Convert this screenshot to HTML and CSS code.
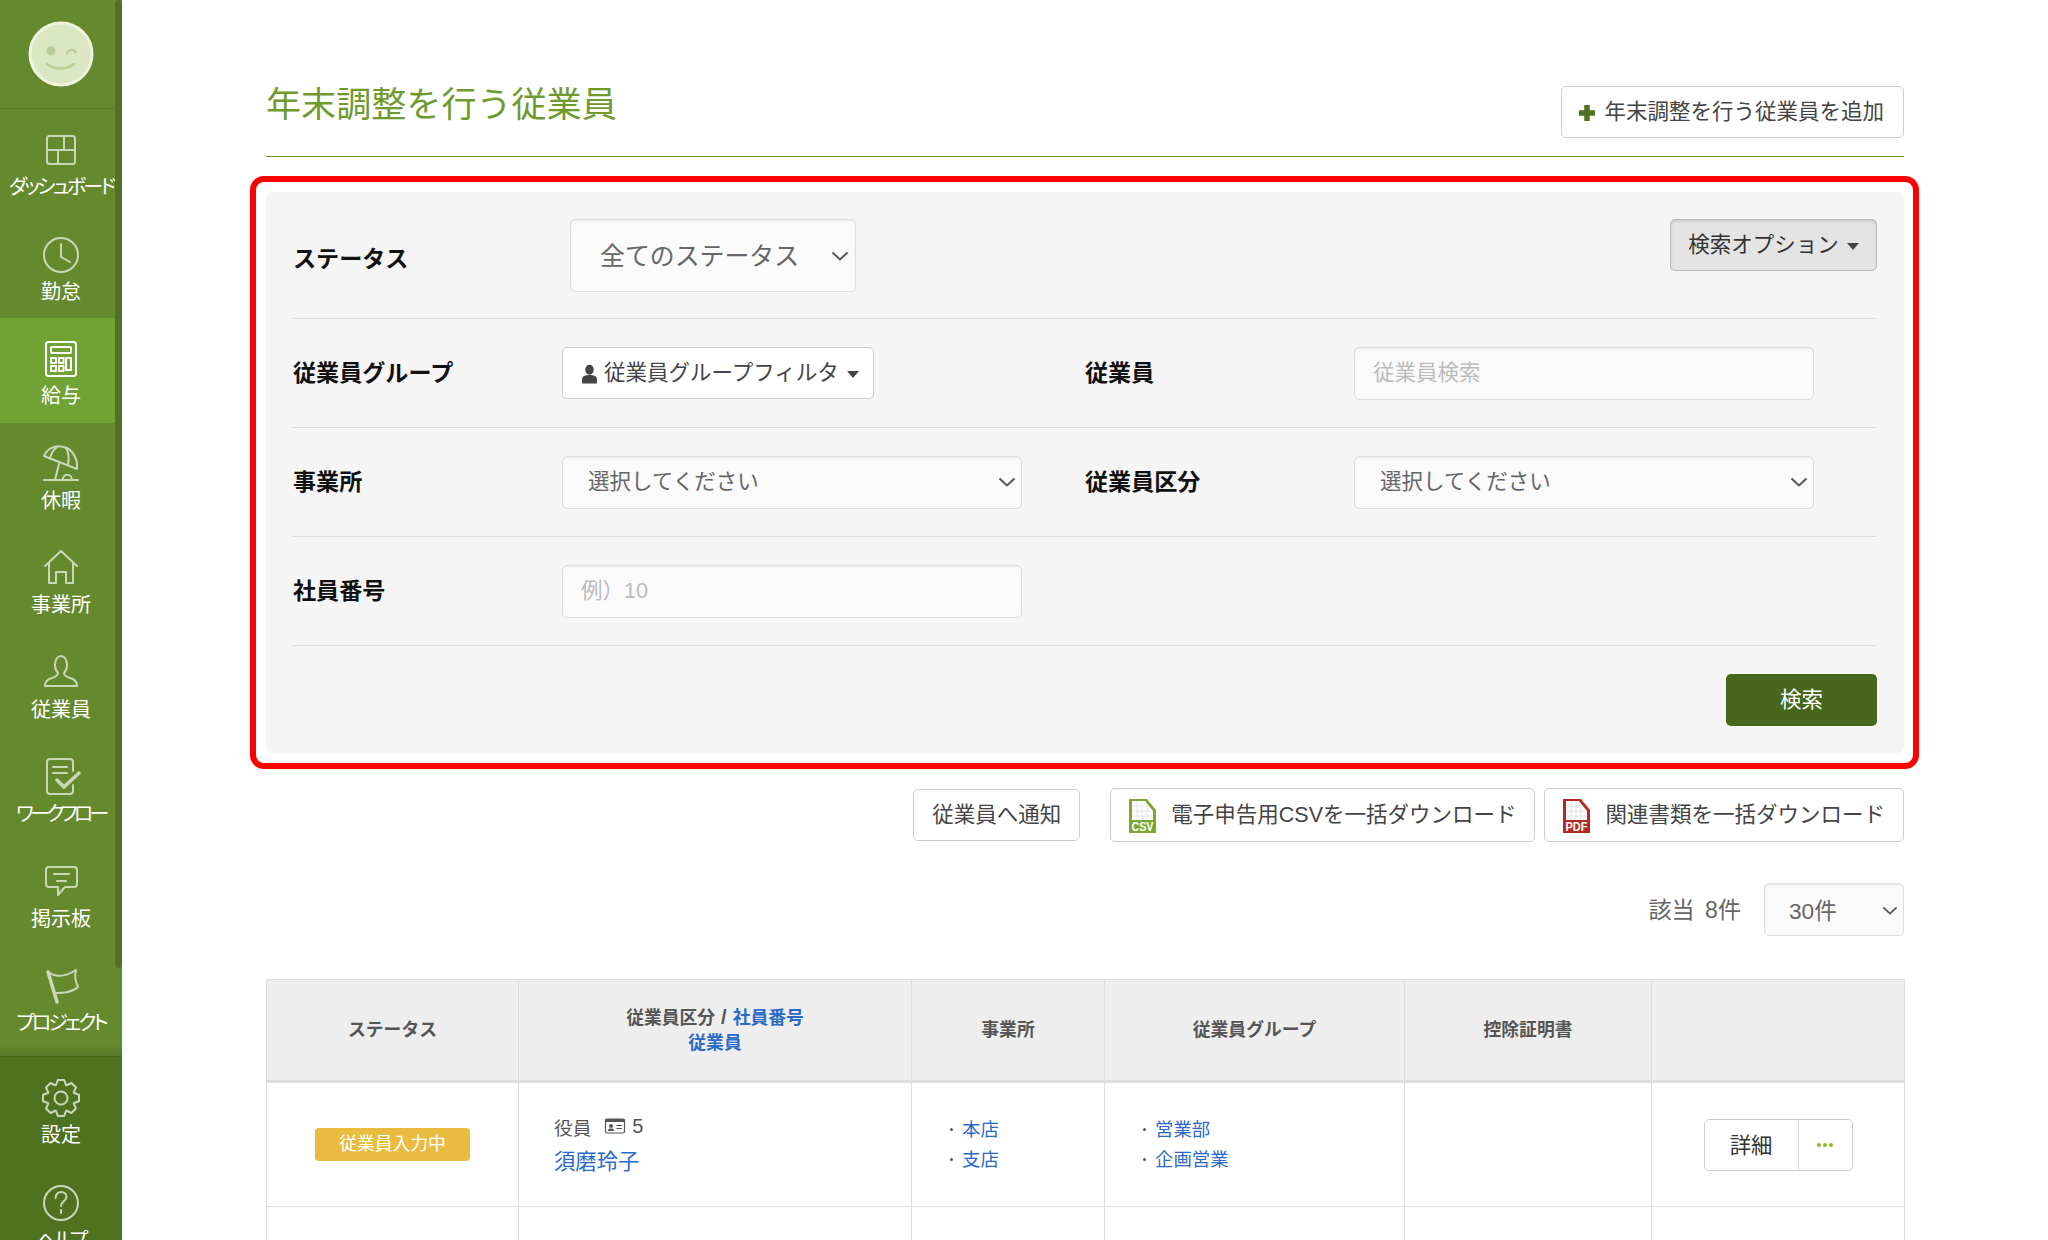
FILE: index.html
```html
<!DOCTYPE html>
<html lang="ja">
<head>
  <meta charset="UTF-8">
  <title>年末調整を行う従業員</title>
  <link rel="stylesheet" href="styles.css">
</head>
<body>
  <aside class="sidebar">
    <div class="scroll-thumb"></div>
    <div class="brand">
      <svg class="logo" width="66" height="66" viewBox="0 0 66 66">
        <circle cx="33" cy="33" r="31" fill="#dbe7c2" stroke="#eef4e0" stroke-width="3"/>
        <circle cx="23" cy="30" r="4.5" fill="#b9cd96"/>
        <path d="M39 32c2-4 7-4 9-1" fill="none" stroke="#b9cd96" stroke-width="2.5" stroke-linecap="round"/>
        <path d="M19 43c7 6 20 6 27 0" fill="none" stroke="#b9cd96" stroke-width="2.5" stroke-linecap="round"/>
      </svg>
    </div>
    <nav class="nav-main">
      <a class="nav-item">
        <svg class="nav-icon" viewBox="0 0 40 40"><rect x="6" y="6" width="28" height="28" rx="2.5"/><path d="M6 20h28M23 6v14M17 20v14"/></svg>
        <span class="nav-label nav-label-kana kana-wide">ダッシュボード</span>
      </a>
      <a class="nav-item">
        <svg class="nav-icon" viewBox="0 0 40 40"><circle cx="20" cy="20" r="17"/><path d="M20 9v13l9 5"/></svg>
        <span class="nav-label">勤怠</span>
      </a>
      <a class="nav-item active">
        <svg class="nav-icon" viewBox="0 0 40 40"><rect x="5" y="3" width="30" height="34" rx="2.5"/><rect x="10" y="8" width="20" height="6" rx="1"/><path d="M10 19h5v5h-5zM18 19h4.500v5H18zM25 19h5v12h-5zM10 27h5v5h-5zM18 27h4.500v5H18z"/></svg>
        <span class="nav-label">給与</span>
      </a>
      <a class="nav-item">
        <svg class="nav-icon" viewBox="0 0 40 40"><path d="M3 12C7 3 16 1 23 3c8 2 14 11 13 22z"/><path d="M16 3c-4 3-6 7-7 12M25 4c3 5 3 12 2 17"/><path d="M18 20l-4 16M3 36h34"/><path d="M22 36c-1-7 9-7 9 0"/></svg>
        <span class="nav-label">休暇</span>
      </a>
      <a class="nav-item">
        <svg class="nav-icon" viewBox="0 0 40 40"><path d="M4 18L20 3l16 15M8 15v20h7V24h10v11h7V15"/></svg>
        <span class="nav-label">事業所</span>
      </a>
      <a class="nav-item">
        <svg class="nav-icon" viewBox="0 0 40 40"><path d="M14 12c0-6 3-9 6-9s6 3 6 9c0 4-2 7-3 8 0 3 3 4 6 5 4 1 7 3 7 8H4c0-5 3-7 7-8 3-1 6-2 6-5-1-1-3-4-3-8z"/></svg>
        <span class="nav-label">従業員</span>
      </a>
      <a class="nav-item">
        <svg class="nav-icon" viewBox="0 0 40 40"><path d="M32 14V5c0-2-1-3-3-3H9C7 2 6 3 6 5v29c0 2 1 3 3 3h20c2 0 3-1 3-3v-6M12 10h14M12 16h14"/><path class="nav-check" d="M16 23l7 7 15-14"/></svg>
        <span class="nav-label nav-label-kana kana-tight">ワークフロー</span>
      </a>
      <a class="nav-item">
        <svg class="nav-icon" viewBox="0 0 40 40"><path d="M8 5h25c2 0 3 1 3 3v14c0 2-1 3-3 3H24l-7 8v-8H8c-2 0-3-1-3-3V8c0-2 1-3 3-3z"/><path d="M13 12h15M16 19h9"/></svg>
        <span class="nav-label">掲示板</span>
      </a>
      <a class="nav-item">
        <svg class="nav-icon" viewBox="0 0 40 40"><path class="nav-pole" d="M7 6l9 30"/><path d="M7 6c7 5 17 5 28-2-2 8 0 12 2 17-7 6-15 6-24 6"/></svg>
        <span class="nav-label nav-label-kana">プロジェクト</span>
      </a>
    </nav>
    <div class="nav-bottom">
      <a class="nav-item">
        <svg class="nav-icon" viewBox="0 0 40 40"><polygon points="15,7 16.800,2 23.200,2 25,7 25.660,7.270 30.470,5.010 34.990,9.530 32.730,14.340 33,15 38,16.800 38,23.200 33,25 32.730,25.660 34.990,30.470 30.470,34.990 25.660,32.730 25,33 23.200,38 16.800,38 15,33 14.340,32.730 9.530,34.990 5.010,30.470 7.270,25.660 7,25 2,23.200 2,16.800 7,15 7.270,14.340 5.010,9.530 9.530,5.010 14.340,7.270"/><circle cx="20" cy="20" r="6.500"/></svg>
        <span class="nav-label">設定</span>
      </a>
      <a class="nav-item">
        <svg class="nav-icon" viewBox="0 0 40 40"><circle cx="20" cy="20" r="17"/><path d="M14.500 15c0-4 3-6 5.500-6 3 0 5.500 2 5.500 5 0 4-5 4-5.500 9"/><path d="M20 27v3"/></svg>
        <span class="nav-label nav-label-kana">ヘルプ</span>
      </a>
    </div>
  </aside>

  <main class="content">
    <header class="page-header">
      <h1 class="page-title">年末調整を行う従業員</h1>
      <button class="btn btn-add"><svg class="plus-icon" width="18" height="18" viewBox="0 0 18 18"><path d="M9 1v16M1 9h16"/></svg>年末調整を行う従業員を追加</button>
    </header>

    <section class="search-panel">
      <div class="highlight-frame"></div>
      <div class="search-row search-row-status">
        <span class="field-label">ステータス</span>
        <div class="select-wrap select-status">
          <select class="field-control"><option>全てのステータス</option></select>
          <svg class="chevron" width="18" height="10" viewBox="0 0 18 10"><path d="M1.500 1.500L9 8.500l7.500-7"/></svg>
        </div>
        <button class="btn btn-options">検索オプション<span class="caret"></span></button>
      </div>
      <div class="search-row">
        <span class="field-label">従業員グループ</span>
        <button class="btn btn-group">
          <svg class="person-icon" width="17" height="20" viewBox="0 0 16 18"><ellipse cx="8" cy="5" rx="4" ry="4.800"/><path d="M1 18v-4c0-3 3-4 7-4s7 1 7 4v4z"/></svg>従業員グループフィルタ<span class="caret"></span>
        </button>
        <span class="field-label field-label-second">従業員</span>
        <input class="field-control" type="text" placeholder="従業員検索">
      </div>
      <div class="search-row">
        <span class="field-label">事業所</span>
        <div class="select-wrap">
          <select class="field-control"><option>選択してください</option></select>
          <svg class="chevron" width="18" height="10" viewBox="0 0 18 10"><path d="M1.500 1.500L9 8.500l7.500-7"/></svg>
        </div>
        <span class="field-label field-label-second">従業員区分</span>
        <div class="select-wrap">
          <select class="field-control"><option>選択してください</option></select>
          <svg class="chevron" width="18" height="10" viewBox="0 0 18 10"><path d="M1.500 1.500L9 8.500l7.500-7"/></svg>
        </div>
      </div>
      <div class="search-row">
        <span class="field-label">社員番号</span>
        <input class="field-control" type="text" placeholder="例）10">
      </div>
      <div class="search-actions">
        <button class="btn btn-search">検索</button>
      </div>
    </section>

    <div class="bulk-actions">
      <button class="btn btn-notify">従業員へ通知</button>
      <button class="btn btn-download">
        <svg class="file-icon" width="27" height="34" viewBox="0 0 27 34">
          <path class="file-csv" d="M0 0h18l9 11v23H0z"/>
          <path class="file-sheet" d="M3 2h13l8 10v9H3z"/>
          <path class="file-grid" d="M3 7h15M3 12h21M3 17h21M8 2v19M13 2v19M18 7v14"/>
          <text class="file-text" x="13.500" y="32" textLength="22" lengthAdjust="spacingAndGlyphs">CSV</text>
        </svg>
        電子申告用CSVを一括ダウンロード
      </button>
      <button class="btn btn-download">
        <svg class="file-icon" width="27" height="34" viewBox="0 0 27 34">
          <path class="file-pdf" d="M0 0h18l9 11v23H0z"/>
          <path class="file-sheet" d="M3 2h13l8 10v9H3z"/>
          <path class="file-grid" d="M3 7h15M3 12h21M3 17h21M8 2v19M13 2v19M18 7v14"/>
          <text class="file-text" x="13.500" y="32" textLength="22" lengthAdjust="spacingAndGlyphs">PDF</text>
        </svg>
        関連書類を一括ダウンロード
      </button>
    </div>

    <div class="result-bar">
      <span class="result-count">該当 8件</span>
      <div class="select-wrap select-per-page">
        <select class="field-control"><option>30件</option></select>
        <svg class="chevron" width="16" height="9" viewBox="0 0 18 10"><path d="M1.500 1.500L9 8.500l7.500-7"/></svg>
      </div>
    </div>

    <table class="employee-table">
      <colgroup>
        <col class="col-status"><col class="col-employee"><col class="col-office"><col class="col-group"><col class="col-cert"><col class="col-action">
      </colgroup>
      <thead>
        <tr>
          <th>ステータス</th>
          <th>従業員区分<span class="th-slash">/</span><a class="link">社員番号</a><br><a class="link">従業員</a></th>
          <th>事業所</th>
          <th>従業員グループ</th>
          <th>控除証明書</th>
          <th></th>
        </tr>
      </thead>
      <tbody>
        <tr class="row-main">
          <td class="cell-center"><span class="badge">従業員入力中</span></td>
          <td class="cell-employee">
            <div class="employee-meta">役員
              <svg class="card-icon" width="22" height="16" viewBox="0 0 21 16"><rect x="1" y="1" width="19" height="14" rx="1.500"/><path class="card-bar" d="M1 1h19v3H1z"/><circle class="card-fill" cx="6.500" cy="8" r="2"/><path class="card-fill" d="M3.500 13c0-2 1-2.500 3-2.500s3 .5 3 2.500z"/><path d="M12 7.500h5.500M12 10.500h5.500"/></svg>
              <span class="employee-code">5</span></div>
            <a class="link employee-name">須磨玲子</a>
          </td>
          <td><ul class="link-list"><li><a class="link">本店</a></li><li><a class="link">支店</a></li></ul></td>
          <td><ul class="link-list"><li><a class="link">営業部</a></li><li><a class="link">企画営業</a></li></ul></td>
          <td></td>
          <td class="cell-center">
            <div class="btn-pair">
              <button class="btn-pair-main">詳細</button>
              <button class="btn-pair-more"><span class="dot"></span><span class="dot"></span><span class="dot"></span></button>
            </div>
          </td>
        </tr>
        <tr class="row-next"><td></td><td></td><td></td><td></td><td></td><td></td></tr>
      </tbody>
    </table>
  </main>
</body>
</html>
```

FILE: styles.css
```css
* {
  box-sizing: border-box;
}

html, body {
  height: 1240px;
  overflow: hidden;
}

body {
  margin: 0;
  display: flex;
  background-color: #fff;
  color: #444;
  font-family: "Liberation Sans", "Noto Sans CJK JP", sans-serif;
  font-size: 21.5px;
}

/* sidebar */
.sidebar {
  position: relative;
  flex: 0 0 122px;
  width: 122px;
  height: 1240px;
  overflow: hidden;
  background-color: #658a2e;
}

.scroll-thumb {
  position: absolute;
  top: 0;
  right: 0;
  width: 7px;
  height: 968px;
  border-radius: 4px;
  background-color: #517226;
  z-index: 2;
}

.brand {
  height: 109px;
  padding-top: 21px;
  display: flex;
  justify-content: center;
  border-bottom: 1px solid #5b7f29;
}

.logo {
  display: block;
}

.nav-main {
  height: 947px;
  background: linear-gradient(to bottom, #658a2e 0, #658a2e 935px, #55792a 947px);
}

.nav-bottom {
  background-color: #4e7220;
  height: 184px;
  border-top: 1px solid #47691c;
}

.nav-item {
  display: block;
  height: 104.5px;
  padding-top: 21px;
  text-align: center;
  color: #fff;
}

.nav-item.active {
  background-color: #71a234;
}

.nav-icon {
  display: block;
  width: 40px;
  height: 40px;
  margin: 0 auto;
  fill: none;
  stroke: #cbd8b7;
  stroke-width: 2;
  stroke-linejoin: round;
  stroke-linecap: round;
}

.active .nav-icon {
  stroke: #fff;
}

.nav-check,
.nav-pole {
  stroke-width: 3.5;
}

.nav-label {
  display: block;
  margin-top: 5px;
  line-height: 24px;
  font-size: 20px;
  white-space: nowrap;
}

.nav-label-kana {
  letter-spacing: -3px;
  font-feature-settings: "palt";
}

.kana-wide {
  letter-spacing: -2.8px;
}

.kana-tight {
  letter-spacing: -3.6px;
}

/* main */
.content {
  flex: 1;
  min-width: 0;
  padding: 86px 144px 0 144px;
}

.page-header {
  display: flex;
  justify-content: space-between;
  align-items: flex-start;
  height: 71px;
  border-bottom: 1px solid #6b8e23;
}

.page-title {
  margin: 1px 0 0;
  font-size: 35.1px;
  font-weight: normal;
  line-height: 36px;
  color: #6f9a2e;
}

.btn {
  display: inline-flex;
  align-items: center;
  height: 52px;
  padding: 2px 19px 0;
  border: 1px solid #ccc;
  border-radius: 5px;
  background-color: #fff;
  color: #444;
  font-family: inherit;
  font-size: 21.5px;
  line-height: 1;
  white-space: nowrap;
}

.btn-add {
  padding-left: 16px;
}

.plus-icon {
  margin-right: 8px;
  fill: none;
  stroke: #4f7320;
  stroke-width: 5.5;
}

.caret {
  display: inline-block;
  width: 0;
  height: 0;
  margin-left: 8px;
  border-top: 7px solid #444;
  border-left: 6.5px solid transparent;
  border-right: 6.5px solid transparent;
}

/* search panel */
.search-panel {
  position: relative;
  margin-top: 35px;
  padding: 0 27px 27px;
  border-radius: 6px;
  background-color: #f5f5f5;
}

.highlight-frame {
  position: absolute;
  top: -16px;
  left: -16px;
  right: -15px;
  bottom: -16px;
  border: 6px solid #f00;
  border-radius: 14px;
  pointer-events: none;
}

.search-row {
  display: grid;
  grid-template-columns: 269px 460px 63px 269px 460px 1fr;
  align-items: center;
  height: 109px;
  border-bottom: 1px solid #ddd;
}

.search-row > :nth-child(3) {
  grid-column: 4;
}

.search-row > :nth-child(4) {
  grid-column: 5;
}

.search-row-status {
  height: 127px;
  padding-top: 27px;
  align-items: start;
}

.search-row-status .field-label {
  margin-top: 25px;
}

.search-row-status .btn-options {
  grid-column: 4 / 7;
  justify-self: end;
}

.field-label {
  color: #111;
  font-size: 23.1px;
  font-weight: bold;
  line-height: 30px;
}

.field-control {
  display: block;
  width: 100%;
  height: 53px;
  padding: 0 18px;
  border: 1px solid #ddd;
  border-radius: 5px;
  background-color: #fafafa;
  box-shadow: inset 0 1px 2px rgba(0, 0, 0, 0.08);
  color: #666;
  font-family: inherit;
  font-size: 21.5px;
  appearance: none;
  outline: none;
}

.field-control::placeholder {
  color: #bbb;
}

.select-wrap {
  position: relative;
}

.select-wrap select {
  padding-left: 25px;
}

.chevron {
  position: absolute;
  top: 50%;
  right: 6px;
  margin-top: -5px;
  fill: none;
  stroke: #555;
  stroke-width: 2;
}

.select-status {
  width: 286px;
  margin-left: 8px;
}

.select-status select {
  height: 73px;
  padding-left: 29px;
  font-size: 24.9px;
}

.select-status .chevron {
  right: 7px;
}

.btn-options {
  width: 207px;
  justify-content: center;
  padding-left: 0;
  padding-right: 0;
  border-color: #bbb;
  background-color: #e4e4e4;
  box-shadow: inset 0 2px 3px rgba(0, 0, 0, 0.1);
  color: #333;
}

.btn-group {
  justify-self: start;
  width: 312px;
  padding-left: 18px;
  padding-right: 0;
}

.person-icon {
  margin-right: 6px;
  fill: #444;
}

.search-actions {
  display: flex;
  justify-content: flex-end;
  padding-top: 28px;
}

.btn-search {
  width: 151px;
  justify-content: center;
  padding-left: 0;
  padding-right: 0;
  border: none;
  background-color: #47681c;
  color: #fff;
}

/* buttons under the panel */
.bulk-actions {
  display: flex;
  justify-content: flex-end;
  align-items: center;
  gap: 9px;
  margin-top: 35px;
}

.btn-notify {
  margin-right: 21px;
  padding-left: 18px;
  padding-right: 18px;
}

.btn-download {
  height: 54px;
  padding-left: 18px;
  padding-right: 18px;
}

.file-icon {
  margin-right: 15px;
}

.file-csv {
  fill: #7aa830;
}

.file-pdf {
  fill: #b52a20;
}

.file-sheet {
  fill: #fff;
}

.file-grid {
  fill: none;
  stroke: #e4e4e4;
  stroke-width: 1;
}

.file-text {
  fill: #fff;
  font-size: 12px;
  font-weight: bold;
  text-anchor: middle;
}

.result-bar {
  display: flex;
  justify-content: flex-end;
  align-items: center;
  gap: 23px;
  margin-top: 41px;
}

.result-count {
  color: #666;
  font-size: 23.1px;
  line-height: 30px;
  word-spacing: 4px;
}

.select-per-page {
  width: 140px;
}

.select-per-page select {
  padding-left: 24px;
  padding-top: 2px;
  font-size: 22.7px;
}

.select-per-page .chevron {
  margin-top: -4px;
}

/* table */
.employee-table {
  width: 1638px;
  margin-top: 43px;
  border-collapse: collapse;
  table-layout: fixed;
}

.col-status { width: 252px; }
.col-employee { width: 393px; }
.col-office { width: 193px; }
.col-group { width: 300px; }
.col-cert { width: 247px; }
.col-action { width: 253px; }

.employee-table th,
.employee-table td {
  border: 1px solid #ddd;
}

.employee-table th {
  height: 102px;
  padding: 0;
  border-bottom: 3px solid #ddd;
  background-color: #eee;
  color: #555;
  font-size: 17.8px;
  line-height: 25px;
}

.th-slash {
  margin: 0 6px;
  font-size: 20px;
}

.link {
  color: #2a6bc8;
}

.row-main td {
  height: 125px;
  padding: 0;
}

.row-next td {
  height: 40px;
}

.cell-center {
  text-align: center;
}

.badge {
  display: inline-block;
  width: 155px;
  height: 33px;
  border-radius: 4px;
  background-color: #e9bc40;
  color: #fff;
  font-size: 17.8px;
  line-height: 33px;
  vertical-align: middle;
}

.cell-employee {
  padding-left: 35px !important;
}

.employee-meta {
  display: flex;
  align-items: center;
  height: 28px;
  color: #555;
  font-size: 18.67px;
}

.card-icon {
  margin: 0 6px 0 13px;
  fill: none;
  stroke: #555;
  stroke-width: 1.2;
}

.card-bar,
.card-fill {
  fill: #555;
  stroke: none;
}

.employee-code {
  font-size: 20px;
}

.employee-name {
  display: block;
  margin-top: 7px;
  font-size: 21.33px;
  line-height: 30px;
}

.link-list {
  margin: 0;
  padding: 0 0 0 50px;
  font-size: 18.4px;
  line-height: 30px;
  list-style: none;
}

.link-list li {
  position: relative;
}

.link-list li::before {
  content: "";
  position: absolute;
  top: 13px;
  left: -12px;
  width: 3px;
  height: 3px;
  border-radius: 50%;
  background-color: #555;
}

.btn-pair {
  display: inline-flex;
  height: 52px;
  width: 149px;
  border: 1px solid #ccc;
  border-radius: 5px;
  background-color: #fff;
  vertical-align: middle;
}

.btn-pair button {
  border: none;
  background: none;
  padding: 0;
  font-family: inherit;
  color: #333;
}

.btn-pair-main {
  width: 94px;
  padding-bottom: 3px !important;
  border-right: 1px solid #ddd !important;
  font-size: 21.33px;
}

.btn-pair-more {
  flex: 1;
  display: flex;
  justify-content: center;
  align-items: center;
  gap: 2px;
}

.dot {
  width: 4px;
  height: 4px;
  border-radius: 50%;
  background-color: #8ab82e;
}
```
